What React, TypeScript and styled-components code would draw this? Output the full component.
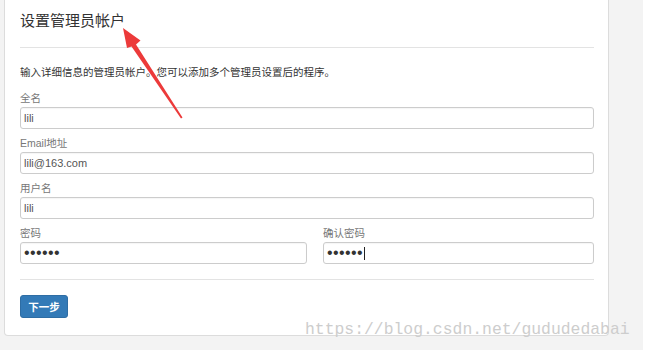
import React from "react";
import styled, { createGlobalStyle } from "styled-components";

const GlobalStyle = createGlobalStyle`
  html, body {
    margin: 0;
    padding: 0;
    background: #ffffff;
  }
  body {
    font-family: "Liberation Sans", "Noto Sans CJK SC", sans-serif;
  }
`;

const App: React.FC = () => {
  return (
    <>
      <GlobalStyle />
      <Page>
        <Panel>
          <Title>设置管理员帐户</Title>
          <Rule />
          <Intro>输入详细信息的管理员帐户。您可以添加多个管理员设置后的程序。</Intro>

          <Group>
            <Label>全名</Label>
            <Field>lili</Field>
          </Group>
          <Group>
            <Label>Email地址</Label>
            <Field>lili@163.com</Field>
          </Group>
          <Group>
            <Label>用户名</Label>
            <Field>lili</Field>
          </Group>
          <Row>
            <Group>
              <Label>密码</Label>
              <Field $secret>••••••</Field>
            </Group>
            <Group>
              <Label>确认密码</Label>
              <Field $secret>
                ••••••
                <Caret />
              </Field>
            </Group>
          </Row>

          <Rule $bottom />
          <Button type="button">下一步</Button>
        </Panel>

        <Watermark>https://blog.csdn.net/gududedabai</Watermark>
        <Arrow width="647" height="352" viewBox="0 0 647 352">
          <path
            d="M182.5 117.5 L136 44.5 L140.5 40.5 L123 28 L127 48 L131.5 46.5 L181 118.5 Z"
            fill="#ec3a3a"
          />
        </Arrow>
      </Page>
    </>
  );
};
export default App;

const Page = styled.div`
  position: relative;
  width: 643px;
  height: 350px;
  background: #f3f3f3;
  overflow: hidden;
  padding-left: 4px;
  box-sizing: border-box;
`;

const Panel = styled.div`
  width: 605px;
  box-sizing: border-box;
  background: #ffffff;
  border: 1px solid #dcdcdc;
  border-top: none;
  border-radius: 0 0 4px 4px;
  padding: 11px 14px 17px 15px;
  display: flex;
  flex-direction: column;
`;

const Title = styled.h3`
  margin: 0;
  font-size: 15px;
  line-height: 20px;
  font-weight: normal;
  color: #333333;
`;

const Rule = styled.div<{ $bottom?: boolean }>`
  height: 1px;
  background: #e3e3e3;
  margin: ${(p) => (p.$bottom ? "15px 0 15px" : "16px 0 17px")};
`;

const Intro = styled.p`
  margin: 0 0 11px;
  font-size: 10.5px;
  line-height: 15px;
  color: #333333;
`;

const Row = styled.div`
  display: grid;
  grid-template-columns: 287px 1fr;
  column-gap: 16px;
`;

const Group = styled.div`
  display: flex;
  flex-direction: column;
  margin-bottom: 7px;

  ${Row} & {
    margin-bottom: 0;
  }
`;

const Label = styled.label`
  font-size: 10.5px;
  line-height: 15px;
  color: #777777;
  margin-bottom: 1px;
`;

const Field = styled.div<{ $secret?: boolean }>`
  height: 22px;
  box-sizing: border-box;
  border: 1px solid #cccccc;
  border-radius: 3px;
  background: #ffffff;
  padding: 0 4px 0 3px;
  display: flex;
  align-items: center;
  font-family: "Liberation Sans", sans-serif;
  font-size: ${(p) => (p.$secret ? "16px" : "11px")};
  letter-spacing: ${(p) => (p.$secret ? "0.4px" : "0")};
  color: ${(p) => (p.$secret ? "#333333" : "#555555")};
  box-shadow: inset 0 1px 1px rgba(0, 0, 0, 0.04);
`;

const Caret = styled.span`
  display: inline-block;
  width: 1px;
  height: 13px;
  background: #222222;
  margin-left: 1px;
`;

const Button = styled.button`
  align-self: flex-start;
  width: 48px;
  height: 23px;
  padding: 0;
  border: 1px solid #2e6da4;
  border-radius: 3px;
  background: #337ab7;
  color: #ffffff;
  font-family: "Liberation Sans", "Noto Sans CJK SC", sans-serif;
  font-size: 10.5px;
  font-weight: 600;
  cursor: pointer;
`;

const Watermark = styled.div`
  position: absolute;
  left: 305px;
  top: 320px;
  font-family: "Liberation Mono", monospace;
  font-size: 16.4px;
  line-height: 20px;
  color: #cdcdcd;
  white-space: nowrap;
`;

const Arrow = styled.svg`
  position: absolute;
  left: 0;
  top: 0;
  pointer-events: none;
`;
